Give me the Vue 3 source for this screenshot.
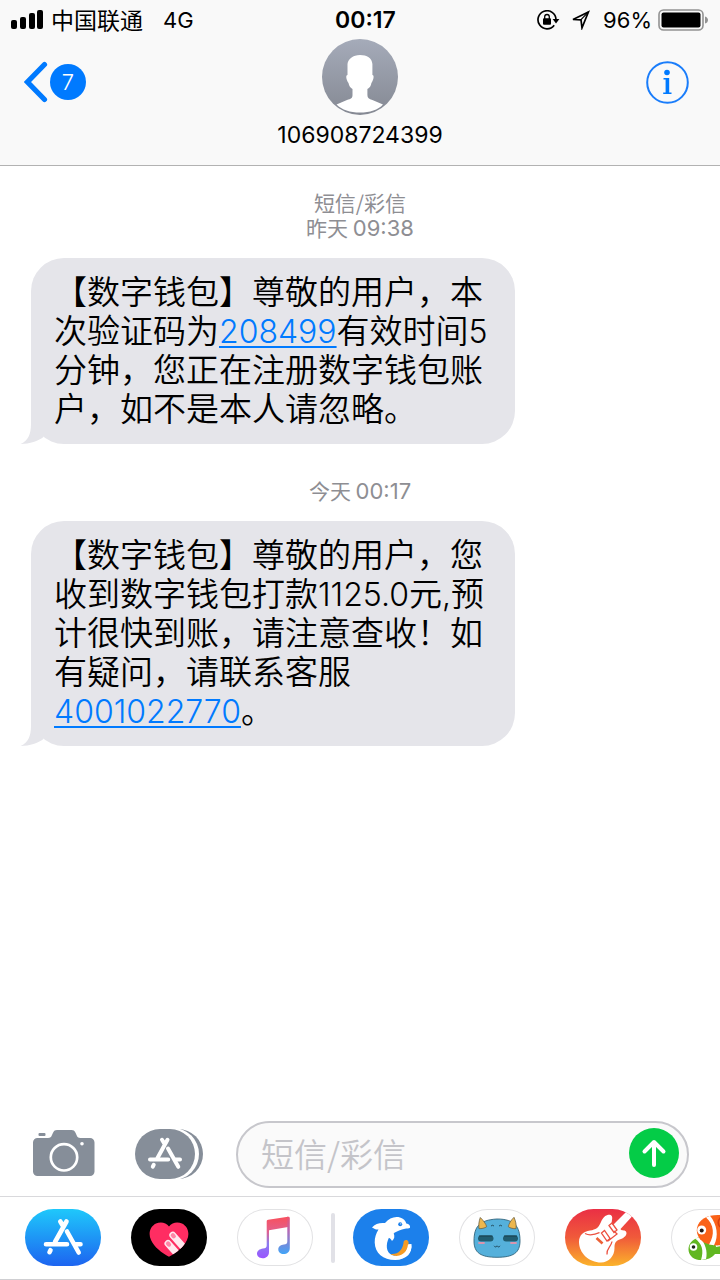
<script setup>
import { ref } from 'vue'

const draft = ref('')
</script>

<template>
  <div class="screen">
    <header class="header">
      <div class="status">
        <div class="status-group">
          <svg class="signal" width="33" height="20" viewBox="0 0 33 20" aria-hidden="true">
            <rect x="0" y="10" width="6" height="9" rx="2" />
            <rect x="9" y="7" width="6" height="12" rx="2" />
            <rect x="18" y="3" width="6" height="16" rx="2" />
            <rect x="26" y="0" width="6" height="19" rx="2" />
          </svg>
          <span class="carrier">中国联通</span>
          <span class="network">4G</span>
        </div>
        <time class="clock">00:17</time>
        <div class="status-group">
          <svg class="lock" width="23" height="20" viewBox="0 0 23 20" aria-hidden="true">
            <path d="M17.2 15.2A9 9 0 1 1 19 9.5" fill="none" stroke="#000" stroke-width="1.7" />
            <path d="M15.6 9h6.8L19 13.4z" />
            <rect x="6" y="8.3" width="8" height="6.4" rx="1" />
            <path d="M7.7 9V6.8a2.3 2.3 0 0 1 4.6 0V9" fill="none" stroke="#000" stroke-width="1.3" />
          </svg>
          <svg class="arrow" width="20" height="20" viewBox="0 0 20 20" aria-hidden="true">
            <path d="M2 9.500 17.400 2 11 17.800 10 9.800z" fill="none" stroke="#000" stroke-width="1.700" />
            <path d="M10 9.600 17.400 2" stroke="#000" stroke-width="1.200" />
          </svg>
          <span class="percent">96%</span>
          <svg class="battery" width="51" height="22" viewBox="0 0 51 22" aria-hidden="true">
            <rect x="1" y="1" width="44" height="20" rx="4.500" fill="none" stroke="#929292" stroke-width="1.600" />
            <rect x="3.500" y="3.500" width="39" height="15" rx="2" />
            <path d="M47 7.500c4 1 4 6 0 7z" fill="#929292" />
          </svg>
        </div>
      </div>
      <nav class="nav">
        <button class="back" type="button" aria-label="返回">
          <svg width="24" height="42" viewBox="0 0 24 42" aria-hidden="true">
            <path d="M20.500 3.500 3.500 21l17 17.500" fill="none" stroke="#007aff" stroke-width="5.200" stroke-linecap="round" />
          </svg>
          <span class="badge">7</span>
        </button>
        <div class="contact">
          <svg width="76" height="76" viewBox="0 0 76 76" aria-hidden="true">
            <defs>
              <linearGradient id="avatar" x1="0" y1="0" x2="0" y2="1">
                <stop offset="0" stop-color="#a5abb9" />
                <stop offset="1" stop-color="#858993" />
              </linearGradient>
            </defs>
            <circle cx="38" cy="38" r="38" fill="url(#avatar)" />
            <path
              d="M38 16c7 0 12 3 12.400 9v11c2 0 1.400 4.500-1 8-.4 3-1.800 5-4 6v6c0 3 1.600 4 5 5l10.600 4.500C56 71 48 73.500 38 73.500S20 71 14.500 65.500L25 61c4-1 5.500-2 5.500-5v-6c-2-1-3.500-3-4-6-2.400-3.500-3-8-1-8V25c.5-5 5.500-9 12.500-9z"
              fill="#fff"
            />
          </svg>
          <h1 class="number">106908724399</h1>
        </div>
        <button class="info" type="button" aria-label="详细信息">
          <svg width="43" height="43" viewBox="0 0 43 43" aria-hidden="true">
            <circle cx="21.500" cy="21.500" r="20.300" fill="none" stroke="#1a7dfb" stroke-width="2" />
            <circle cx="21" cy="11.500" r="2.800" fill="#007aff" />
            <path d="M17.500 17H23.200V31.500H25.500V33H17.200V31.500H19.600V18.500H17.500z" fill="#007aff" />
          </svg>
        </button>
      </nav>
    </header>

    <main class="thread">
      <p class="stamp">短信/彩信<br />昨天 <span class="latin">09:38</span></p>
      <div class="bubble">
        <svg class="tail" width="24" height="34" viewBox="0 0 24 34" aria-hidden="true">
          <path d="M11 0V14C11 24 8 31 .5 34 10 34 18 31 23.500 27L24 0z" fill="#e5e5ea" />
        </svg>
        <p class="text">【数字钱包】尊敬的用户，本次验证码为<a class="link" href="#">208499</a>有效时间<span class="digits">5</span>分钟，您正在注册数字钱包账户，如不是本人请忽略。</p>
      </div>
      <p class="stamp">今天 <span class="latin">00:17</span></p>
      <div class="bubble">
        <svg class="tail" width="24" height="34" viewBox="0 0 24 34" aria-hidden="true">
          <path d="M11 0V14C11 24 8 31 .5 34 10 34 18 31 23.500 27L24 0z" fill="#e5e5ea" />
        </svg>
        <p class="text">【数字钱包】尊敬的用户，您收到数字钱包打款<span class="digits">1125.0</span>元<span class="digits">,</span>预计很快到账，请注意查收！如有疑问，请联系客服<a class="link" href="tel:4001022770">4001022770</a>。</p>
      </div>
    </main>

    <form class="composer" @submit.prevent>
      <button class="tool" type="button" aria-label="相机">
        <svg width="62" height="47" viewBox="0 0 62 47" aria-hidden="true">
          <path d="M4.500 8H15c2.500 0 3-.8 4-3l1-2.300C21 .7 22 0 24 0h14.500c2 0 3 .7 4 2.700l1 2.300c1 2.200 1.500 3 4 3h9.500a4.500 4.500 0 0 1 4.500 4.500v29a4.500 4.500 0 0 1-4.500 4.500H4.500A4.500 4.500 0 0 1 0 41.500v-29A4.500 4.500 0 0 1 4.500 8z" fill="#868e99" />
          <rect x="5.500" y="3" width="7" height="3" rx="1" fill="#868e99" />
          <circle cx="31" cy="27.300" r="13.200" fill="none" stroke="#fff" stroke-width="2.700" />
          <circle cx="49" cy="13.700" r="1.800" fill="#fff" />
        </svg>
      </button>
      <button class="tool apps" type="button" aria-label="应用">
        <svg width="68" height="50" viewBox="0 0 68 50" aria-hidden="true">
          <rect x="8" width="60" height="50" rx="25" fill="#868e99" />
          <rect x="4" y="-1" width="60" height="52" rx="26" fill="#fff" />
          <rect width="60" height="50" rx="25" fill="#868e99" />
          <g fill="none" stroke="#fff" stroke-width="4" stroke-linecap="round">
            <path d="M32.500 10.800 22.500 29M27 10.800l2.600 4.200M33 19.500l10.300 18.300" />
            <path d="M15 30.400h18.200M40.500 30.400h4.500M18.700 35.800l-.9 1.800" />
          </g>
        </svg>
      </button>
      <div class="field">
        <input v-model="draft" class="entry" type="text" placeholder="短信/彩信" aria-label="短信/彩信" />
        <button class="send" type="submit" aria-label="发送">
          <svg width="50" height="50" viewBox="0 0 50 50" aria-hidden="true">
            <path d="M25 37V14M15.500 23.500 25 14l9.500 9.500" fill="none" stroke="#fff" stroke-width="4" stroke-linecap="round" stroke-linejoin="round" />
          </svg>
        </button>
      </div>
    </form>

    <div class="dock">
      <button class="app store" type="button" aria-label="App Store">
        <svg width="76" height="57" viewBox="0 0 76 57" aria-hidden="true">
          <g fill="none" stroke="#fff" stroke-width="4.600" stroke-linecap="round">
            <path d="M41.500 12.500 30 33M35.300 12.500l3 5M42 22.500l11.700 21" />
            <path d="M21 35.200h21M50.500 35.200h5M25.500 41.200l-1 2" />
          </g>
        </svg>
      </button>
      <button class="app touch" type="button" aria-label="Digital Touch">
        <svg width="76" height="57" viewBox="0 0 76 57" aria-hidden="true">
          <defs>
            <clipPath id="heart">
              <path d="M38 17.500C41 13 47 12.500 51 14.500c6 3 8 10 5 16.500C53 38 45 44 38 47.800 31 44 23 38 20 31c-3-6.500-1-13.500 5-16.500 4-2 10-1.500 13 3z" />
            </clipPath>
          </defs>
          <g clip-path="url(#heart)">
            <rect x="15" y="10" width="46" height="40" fill="#ff2d62" />
            <g stroke="#ffe9ef" stroke-width="7" stroke-linecap="round">
              <path d="M41.800 26.200 54 40M37 34.500 49 48" />
            </g>
            <path d="M41.800 26.200l1 1.100M37 34.500l1 1.100" stroke="#ff86a6" stroke-width="4.200" stroke-linecap="round" />
          </g>
        </svg>
      </button>
      <button class="app" type="button" aria-label="音乐">
        <svg width="76" height="57" viewBox="0 0 76 57" aria-hidden="true">
          <defs>
            <linearGradient id="note" x1="0" y1="0" x2="0" y2="1">
              <stop offset="0" stop-color="#f9505c" />
              <stop offset=".35" stop-color="#e2608c" />
              <stop offset=".65" stop-color="#8b7cf0" />
              <stop offset="1" stop-color="#9a55ff" />
            </linearGradient>
            <linearGradient id="stem" x1="0" y1="0" x2="0" y2="1">
              <stop offset="0" stop-color="#f0506c" />
              <stop offset=".4" stop-color="#b16bb8" />
              <stop offset="1" stop-color="#41a5f8" />
            </linearGradient>
          </defs>
          <path d="M29.700 12.500c0-1 .4-1.500 1.500-1.700L51 7.700V18L32 21.200V43c0 4-3 6.300-6.500 6.300-3.300 0-5.500-2-5.500-4.700 0-3 2.500-4.600 6-5.200 2.500-.4 3.700-.8 3.700-3z" fill="url(#note)" />
          <path d="M50.300 7.800c1.800-.4 2.500 0 2.500 1.500V39c0 4-2.800 6-6.200 6-3.200 0-5.300-1.800-5.300-4.500 0-3 2.300-4.500 5.600-5 2.400-.4 3.400-.9 3.400-3z" fill="url(#stem)" />
        </svg>
      </button>
      <span class="divider"></span>
      <button class="app dolphin" type="button" aria-label="携程旅行">
        <svg width="76" height="57" viewBox="0 0 76 57" aria-hidden="true">
          <path d="M19 18.500C22 14.500 27 13.500 32 14 36 9 42 7 47 8.500c3.500 1 5.500 3 6.300 6 2.700.3 4.300 2 3.700 4.300-1 1-3.300.7-5 1-4 .8-8 2.500-11 4.200 1.200 3 .8 5.500-1.500 7.500-.8-1.500-1.700-2.500-3.500-3-3.500 7-3 15 3 17.500 6.500 1.500 11-3.500 13-10.500l6-.3c2 8.300-4.300 15.500-15.800 15.800C30 51 22 44 21.700 33.500c-.1-5 1.300-9 3.800-13-2.500.3-4-.5-6.500-2z" fill="#fff" />
          <path d="M37 28.500c-2.500 7-1.500 14 4 18 7-1 11-5 12-11.500L50 31c-3-6-7-8-11-6z" fill="#1c80eb" />
          <path d="M40.500 24c1.500 3 1 6-1.500 8-1-2-2-3-4-3.500l2-5z" fill="#fff" />
          <path d="M50.500 34C50 31 54.500 29.500 55.500 33c1 7-4 13-12 14-3-.2-4.500-.8-6-2 8 .8 12-4.500 13-11z" fill="#f49b24" />
          <path d="M55 35.500l3.500-.6C59.500 43 53 50 44 50l-4-2c9 1 14-4.500 15-12.500z" fill="#fff" />
          <circle cx="47.200" cy="15.300" r="2" fill="#1c80eb" />
          <circle cx="47.800" cy="14.800" r=".6" fill="#fff" />
        </svg>
      </button>
      <button class="app" type="button" aria-label="表情贴纸">
        <svg width="76" height="57" viewBox="0 0 76 57" aria-hidden="true">
          <path d="M15 32c0-14 5-21 23-22 18 0 23 8 23 22 0 12-7 16.300-23 16.300S15 44 15 32z" fill="#55b0db" stroke="#32647c" stroke-width=".9" />
          <path d="M21.300 8.500c3 3 5.500 6 6.400 9.200-2.300 1.600-5 2-7.700 2-.6-4 0-7.500 1.300-11.200zM55 8.300c-3 3-5 6-5.700 9.400 2.300 1.600 4.700 2 7.700 2 .6-4-.4-7.700-2-11.400z" fill="#edb74e" stroke="#6d6348" stroke-width=".8" />
          <rect x="19" y="26.500" width="15.500" height="6" rx="3" fill="#205c70" />
          <rect x="44" y="26.500" width="15" height="6" rx="3" fill="#205c70" />
          <path d="M20 27h13.500M45 27h13" stroke="#193c4a" stroke-width="1.200" />
          <path d="M35 36.800c1 1.500 2.300 1.500 3 0 1 1.500 2.300 1.500 3 0M32 17q1.500-1.500 3 0M40 17q1.500-1.500 3 0" fill="none" stroke="#244c5e" stroke-width="1" />
          <path d="M20 34h5M52 34h5" stroke="#d995af" stroke-width="1.800" stroke-linecap="round" />
        </svg>
      </button>
      <button class="app band" type="button" aria-label="库乐队">
        <svg width="76" height="57" viewBox="0 0 76 57" aria-hidden="true">
          <path d="M14 33c0-7 4.500-10.500 11-11.500 6-.8 8.500-3 10.500-7.500 1.500-4 3.500-7 7-8 3.500-.8 5.500 1 4.500 5-.5 2.500-.5 4 1 5L61.500 2.500l5.500 5L55.500 20c.5 2 4 .6 5.500 2.500 1.800 3-1.500 6.200-5 7.500-6 2-6.500 4.500-6.500 9 0 8-5.500 14.500-13.500 14.500C24 53.500 14 44 14 33z" fill="#fff" />
          <g fill="none" stroke="#ec5140" stroke-width="1.300">
            <path d="M44 16.500l3-2.500 5 7-3 2.500zM36.500 24l3-2.500 5.500 8-3 2.500zM49 22l3 3-9 7" />
            <path d="M20 24.500c5 2.500 9 1 14.500-1M42 45.500c-1-6 4-7 5-13" />
          </g>
          <path d="M31.500 29l6 5.500" stroke="#ec6035" stroke-width="2.600" />
        </svg>
      </button>
      <button class="app" type="button" aria-label="小鱼贴纸">
        <svg width="76" height="57" viewBox="0 0 76 57" aria-hidden="true">
          <path d="M18 37c2-6 8-9.500 15-9 8 1 12 7 12 10l6-1v8l-7 0C41 49 35 51.500 28 51c-8-1-12-8-10-14z" fill="#61b721" />
          <path d="M24 29.500c7 5 9 12 6 21.500l5-.8c2-8-1-16-6-22z" fill="#fff" />
          <path d="M26 19C28 10 36 6 47 6h9v29c-6 2-15 2-22-1-6-3-9-9-8-15z" fill="#fa6218" />
          <path d="M35 8.500c8 7 9 17 3 27l5 .8c5-9 3-21-4-29.500z" fill="#fff" />
          <path d="M50 8q-5 5-1 10" fill="none" stroke="#d93f0d" stroke-width="1.500" />
          <circle cx="30.700" cy="21" r="4.500" fill="#fff" />
          <circle cx="30.700" cy="21.500" r="2" fill="#251914" />
          <circle cx="22.500" cy="38" r="3.800" fill="#fff" />
          <circle cx="22.500" cy="38" r="1.800" fill="#1e2618" />
        </svg>
      </button>
    </div>
  </div>
</template>

<style>
body {
  background: #fff;
}
</style>

<style scoped>
.screen {
  display: flex;
  flex-direction: column;
  min-height: 100vh;
  overflow: hidden;
  color: #000;
  font-family: Inter, "Noto Sans CJK SC", sans-serif;
}

button {
  margin: 0;
  padding: 0;
  border: 0;
  background: none;
  font: inherit;
  color: inherit;
  cursor: pointer;
}

svg {
  display: block;
  flex: none;
}

.header {
  background: #f9f9f9;
  border-bottom: 1px solid #b2b2b2;
}

.status {
  display: flex;
  align-items: center;
  justify-content: space-between;
  height: 39px;
  padding: 0 11px;
  font-size: 22px;
}

.status-group {
  display: flex;
  align-items: center;
}

.carrier {
  margin: 0 20px 0 7px;
  font-family: "Noto Sans CJK SC", sans-serif;
  font-size: 23px;
  line-height: 39px;
}

.clock {
  font-size: 23px;
  font-weight: 600;
}

.arrow {
  margin: 0 12px 0 11px;
}

.percent {
  margin-right: 6px;
}

.nav {
  display: grid;
  grid-template-columns: 1fr auto 1fr;
  align-items: start;
  padding: 0 24px 17px;
}

.back {
  display: flex;
  align-items: center;
  gap: 2px;
  justify-self: start;
  margin-top: 22px;
}

.badge {
  width: 36px;
  border-radius: 50%;
  background: #007aff;
  color: #fff;
  font-size: 22px;
  font-weight: 300;
  line-height: 36px;
  text-align: center;
}

.contact {
  display: flex;
  flex-direction: column;
  align-items: center;
  gap: 7px;
}

.number {
  margin: 0;
  font-size: 23px;
  font-weight: 400;
  line-height: 26px;
}

.info {
  justify-self: end;
  margin: 22px 7px 0 0;
}

.thread {
  flex: 1;
  padding: 24px 31px;
}

.stamp {
  margin: 0;
  color: #8e8e93;
  font-family: "Noto Sans CJK SC", sans-serif;
  font-size: 21px;
  line-height: 25px;
  text-align: center;
}

.latin {
  font-family: Inter, sans-serif;
  font-size: 22px;
  line-height: 1;
}

.bubble {
  position: relative;
  width: fit-content;
  max-width: 484px;
  box-sizing: border-box;
  margin: 18px 0 34px;
  padding: 13px 22px 17px 23px;
  border-radius: 33px;
  background: #e5e5ea;
}

.tail {
  position: absolute;
  left: -11px;
  bottom: 0;
}

.text {
  margin: 0;
  font-family: "Noto Sans CJK SC", sans-serif;
  font-size: 33px;
  font-weight: 350;
  line-height: 39px;
  text-spacing-trim: space-all;
}

.digits,
.link {
  font-family: Inter, sans-serif;
  font-size: 32px;
  line-height: 1;
}

.link {
  color: #007aff;
  text-decoration: underline;
  text-decoration-thickness: 2px;
  text-underline-offset: 3px;
}

.composer {
  display: flex;
  align-items: center;
  padding: 0 31px 8px 33px;
}

.tool {
  margin-bottom: 2px;
}

.apps {
  margin-right: 33px;
  margin-left: 40px;
}

.field {
  display: flex;
  flex: 1;
  align-items: center;
  min-width: 0;
  padding: 5px 8px 8px 23px;
  border: 2px solid #c7c7cc;
  border-radius: 34px;
  background: #fafafa;
}

.entry {
  flex: 1;
  min-width: 0;
  height: 50px;
  padding: 0;
  border: 0;
  outline: 0;
  background: none;
  color: #000;
  font-family: "Noto Sans CJK SC", sans-serif;
  font-size: 33px;
}

.entry::placeholder {
  color: #c4c4c9;
  font-weight: 350;
  opacity: 1;
}

.send {
  border-radius: 50%;
  background: #04cc47;
}

.dock {
  display: flex;
  align-items: center;
  gap: 30px;
  padding: 12px 0 13px 25px;
  border-top: 1px solid #d9d9dc;
  border-bottom: 1px solid #cfcfd2;
  overflow: hidden;
}

.app {
  flex: none;
  overflow: hidden;
  border-radius: 29px;
  box-shadow: inset 0 0 0 1px #e2e2e4;
}

.store {
  background: linear-gradient(#1fc8fb, #1d64f0);
  box-shadow: none;
}

.touch {
  background: #000;
  box-shadow: none;
}

.dolphin {
  background: #1c80eb;
  box-shadow: none;
}

.band {
  background: linear-gradient(#ea2f45, #f05a3a 50%, #fbb32b);
  box-shadow: none;
}

.divider {
  flex: none;
  width: 4px;
  height: 50px;
  margin: 0 -12px;
  border-radius: 2px;
  background: #e1e1e7;
}
</style>
